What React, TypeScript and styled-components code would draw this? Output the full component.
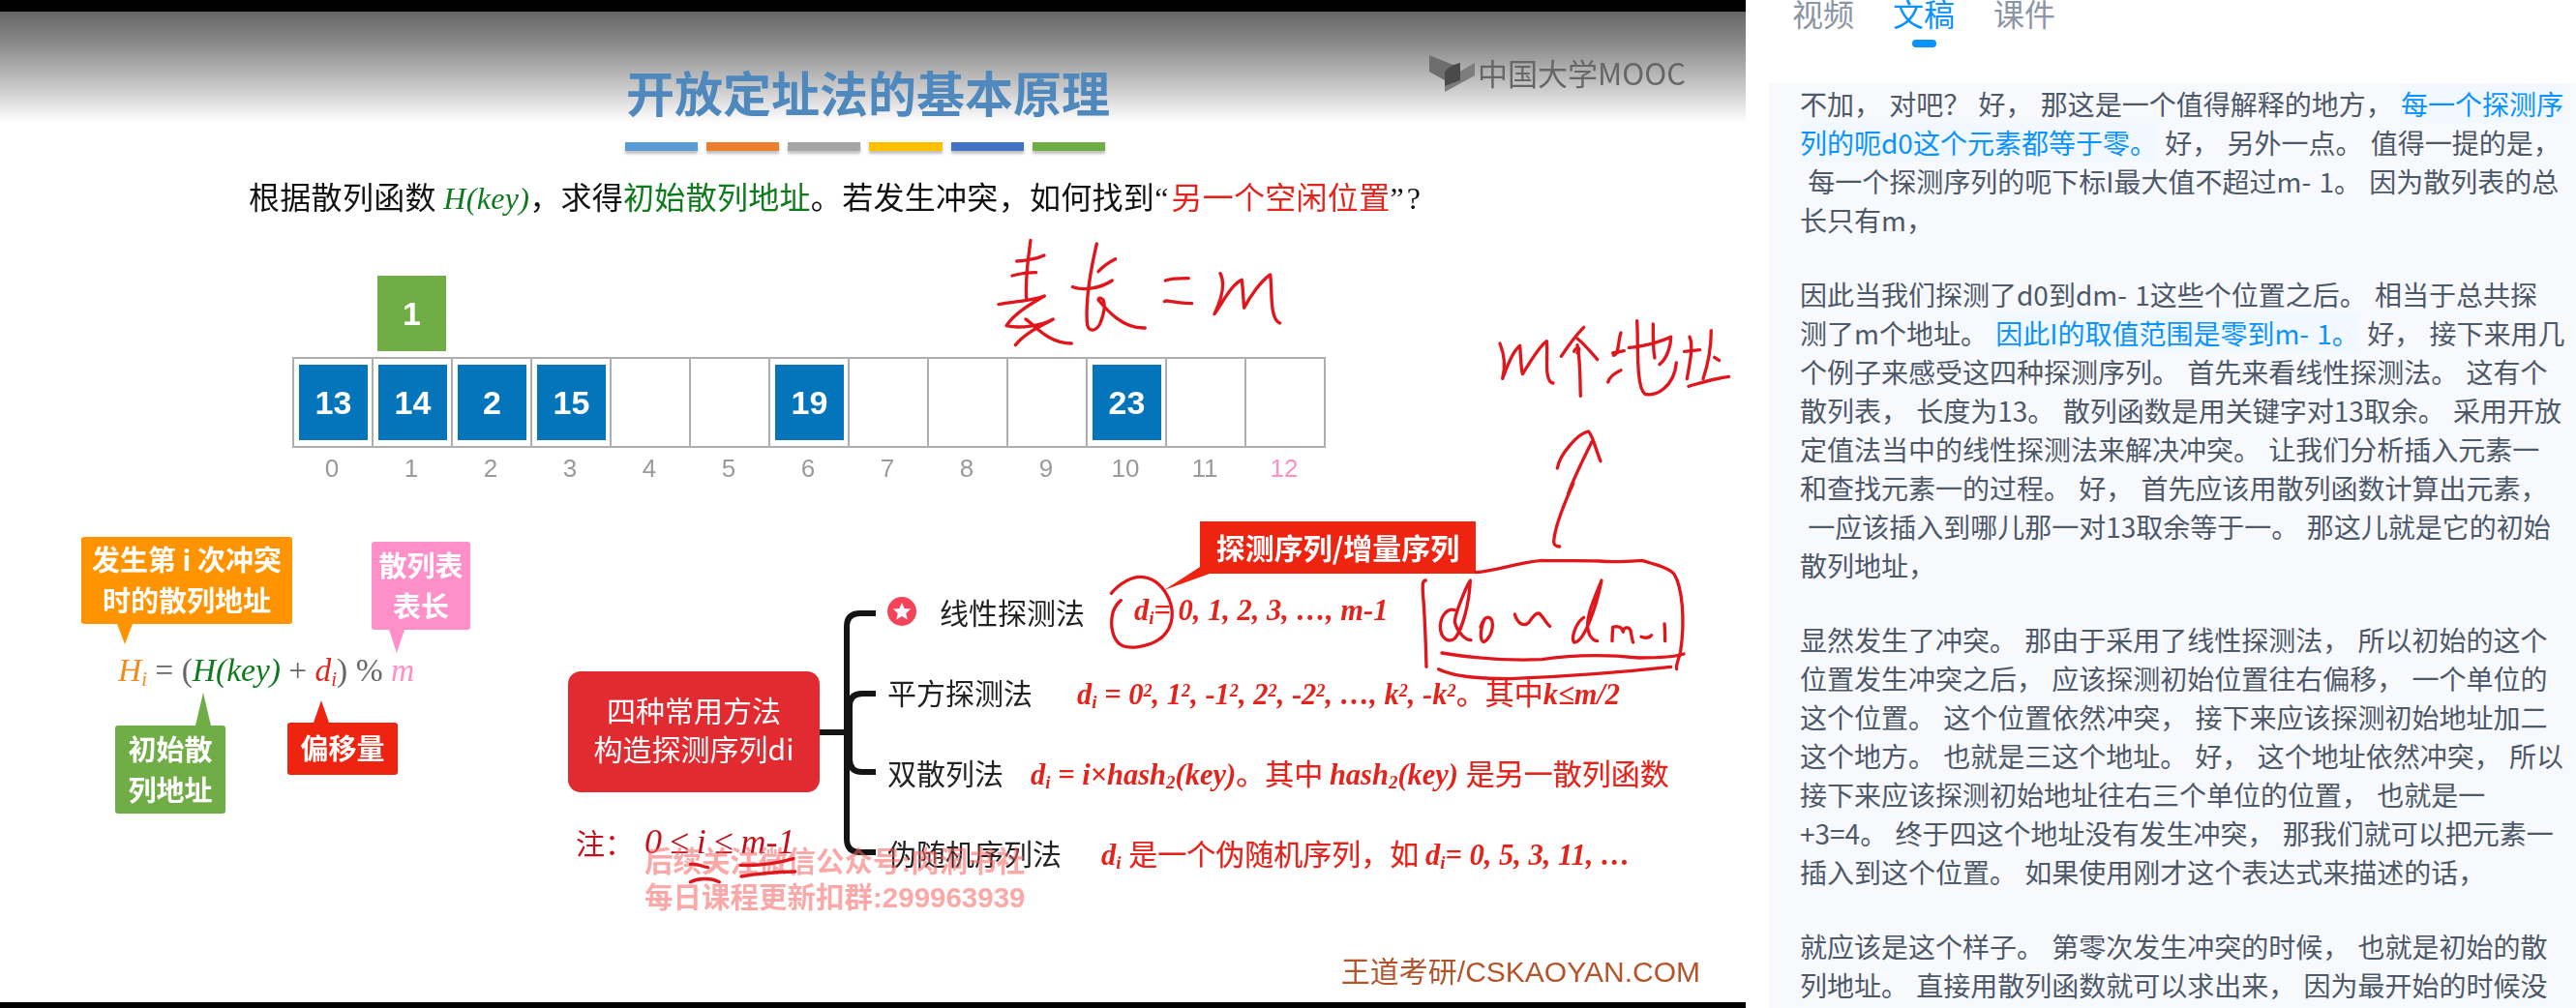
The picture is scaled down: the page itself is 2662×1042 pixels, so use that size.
import React from 'react';
import styled, { createGlobalStyle } from 'styled-components';

const CJK = '"Noto Sans CJK SC", sans-serif';
const LATIN_CJK = '"Liberation Sans", "Noto Sans CJK SC", sans-serif';
const SERIF = '"Liberation Serif", "Noto Sans CJK SC", serif';

const Global = createGlobalStyle`
  html, body { margin: 0; padding: 0; background: #fff; overflow: hidden; }
  #root { width: 2662px; height: 1042px; overflow: hidden; }
`;

const Page = styled.div`
  display: flex;
  width: 2662px;
  height: 1042px;
  overflow: hidden;
  background: #fff;
`;

const SlideFrame = styled.div`
  position: relative;
  flex: 0 0 1804px;
  height: 1042px;
  overflow: hidden;
  background: #000;
  padding: 12px 0 6px;
  box-sizing: border-box;
`;

const Slide = styled.div`
  position: relative;
  height: 1024px;
  background: #fff;
  filter: blur(0.5px);
  font-family: ${CJK};
`;

const Header = styled.header`
  display: flex;
  align-items: flex-start;
  box-sizing: border-box;
  height: 115px;
  padding: 45px 0 0 647px;
  background: linear-gradient(#666 0%, #8c8c8c 30%, #c4c4c4 65%, #fff 100%);
`;

const Title = styled.h1`
  margin: 10px 0 0;
  font-size: 50px;
  line-height: 55px;
  font-weight: 700;
  white-space: nowrap;
  color: #4f88bd;
`;

const Logo = styled.div`
  display: flex;
  align-items: flex-start;
  margin-left: 330px;
  color: #666;
`;

const LogoText = styled.span`
  margin: 0 0 0 2px;
  font-size: 31px;
  line-height: 36px;
  white-space: nowrap;
`;

const Bars = styled.div`
  display: grid;
  grid-template-columns: repeat(6, 1fr);
  gap: 9px;
  width: 496px;
  margin: 20px 0 0 646px;
`;

const Bar = styled.span<{ $color: string }>`
  height: 9px;
  background: ${(p) => p.$color};
  box-shadow: 0 3px 3px rgba(0, 0, 0, 0.25);
`;

const Lead = styled.p`
  margin: 22px 0 0 257px;
  font-size: 32px;
  line-height: 48px;
  letter-spacing: 0.3px;
  color: #111;
  white-space: nowrap;
`;

const Green = styled.span`
  color: #0d7a1c;
`;

const Red = styled.span`
  color: #e3241c;
`;

const Math = styled.i`
  font-family: ${SERIF};
`;

const Quote = styled.span`
  font-family: "Liberation Serif", serif;
  letter-spacing: 3px;
`;

const Floating = styled.div`
  display: flex;
  align-items: center;
  justify-content: center;
  width: 71px;
  height: 78px;
  margin: 56px 0 6px 390px;
  background: #70ad47;
  color: #fff;
  font: 700 34px "Liberation Sans", sans-serif;
`;

const Table = styled.div`
  display: grid;
  grid-template-columns: repeat(13, 82px);
  box-sizing: border-box;
  width: 1068px;
  height: 94px;
  margin-left: 302px;
  border: 2px solid #aeaeae;
  border-left: 0;
`;

const Cell = styled.div`
  box-sizing: border-box;
  padding: 6px 0 0 5px;
  border-left: 2px solid #aeaeae;
`;

const Key = styled.div`
  display: flex;
  align-items: center;
  justify-content: center;
  width: 71px;
  height: 78px;
  background: #0474bb;
  color: #fff;
  font: 700 34px "Liberation Sans", sans-serif;
`;

const Indexes = styled.div`
  display: grid;
  grid-template-columns: repeat(13, 82px);
  width: 1066px;
  height: 42px;
  margin-left: 302px;
`;

const Index = styled.span<{ $pink?: boolean }>`
  text-align: center;
  font: 26px/42px "Liberation Sans", sans-serif;
  color: ${(p) => (p.$pink ? '#ff8fc8' : '#9a9a9a')};
`;

const Lower = styled.div`
  display: flex;
  align-items: flex-start;
`;

const FormulaColumn = styled.section`
  flex: 0 0 587px;
  box-sizing: border-box;
  padding-top: 50px;
`;

const CalloutRow = styled.div<{ $left: number; $gap: number }>`
  display: flex;
  align-items: flex-start;
  gap: ${(p) => p.$gap}px;
  margin-left: ${(p) => p.$left}px;
`;

const Callout = styled.div<{
  $color: string;
  $w: number;
  $h: number;
  $top?: number;
  $tipX: number;
  $tipH: number;
  $up?: boolean;
}>`
  position: relative;
  display: flex;
  flex-direction: column;
  align-items: center;
  justify-content: center;
  box-sizing: border-box;
  width: ${(p) => p.$w}px;
  height: ${(p) => p.$h}px;
  margin-top: ${(p) => p.$top ?? 0}px;
  padding-bottom: 4px;
  border-radius: 3px;
  background: ${(p) => p.$color};
  color: #fff;
  font-size: 29px;
  line-height: 42px;
  font-weight: 700;
  white-space: nowrap;

  &::after {
    content: '';
    position: absolute;
    left: ${(p) => p.$tipX - 8}px;
    ${(p) => (p.$up ? `bottom: 100%;` : `top: 100%;`)}
    width: 16px;
    height: ${(p) => p.$tipH}px;
    background: ${(p) => p.$color};
    clip-path: ${(p) =>
      p.$up ? 'polygon(50% 0, 100% 100%, 0 100%)' : 'polygon(0 0, 100% 0, 50% 100%)'};
  }
`;

const Formula = styled.div`
  margin: 19px 0 31px 122px;
  font: 33.5px/46px ${SERIF};
  color: #666;
  white-space: nowrap;
`;

const Term = styled.i<{ $color: string }>`
  color: ${(p) => p.$color};
`;

const Sub = styled.sub`
  font-size: 0.62em;
  line-height: 0;
  vertical-align: -0.22em;
`;

const Sup = styled.sup`
  font-size: 0.6em;
  line-height: 0;
  vertical-align: 0.42em;
`;

const MethodColumn = styled.section`
  flex: 0 0 260px;
  padding-top: 189px;
`;

const MethodBox = styled.div`
  display: flex;
  flex-direction: column;
  align-items: center;
  justify-content: center;
  box-sizing: border-box;
  height: 125px;
  padding-bottom: 8px;
  border-radius: 13px;
  background: #e22b30;
  color: #fff;
  font-size: 30px;
  line-height: 40px;
  white-space: nowrap;
`;

const Note = styled.div`
  display: flex;
  margin: 31px 0 0 8px;
  color: #c3101c;
  font-size: 30px;
  line-height: 40px;
  white-space: nowrap;
`;

const NoteMath = styled.i`
  margin-left: 11px;
  font-family: ${SERIF};
  font-size: 36px;
  word-spacing: -1px;
`;

const Brace = styled.svg`
  flex: 0 0 58px;
  margin-top: 118px;
`;

const Branches = styled.section`
  display: flex;
  flex-direction: column;
  flex: 1;
  box-sizing: border-box;
  padding: 85px 47px 0 12px;
`;

const Branch = styled.div<{ $gap: number }>`
  display: flex;
  align-items: center;
  gap: ${(p) => p.$gap}px;
  height: 83px;
  white-space: nowrap;
`;

const BranchName = styled.span`
  display: flex;
  align-items: center;
  gap: 24px;
  font-size: 30px;
  color: #222;
`;

const Rule = styled.span`
  font: italic 700 30.5px ${SERIF};
  color: #e3241c;
`;

const RuleCjk = styled.span`
  font: 400 30px ${CJK};
  -webkit-text-stroke: 0.2px #e3241c;
`;

const Credit = styled.div`
  align-self: flex-end;
  margin-top: 63px;
  font: 30px/40px ${LATIN_CJK};
  color: #b5532a;
  white-space: nowrap;
`;

const ProbeTag = styled.div`
  position: absolute;
  left: 1240px;
  top: 527px;
  display: flex;
  align-items: center;
  justify-content: center;
  box-sizing: border-box;
  width: 285px;
  height: 54px;
  padding-bottom: 3px;
  background: #ee2410;
  color: #fff;
  font-size: 30px;
  font-weight: 700;
  white-space: nowrap;

  &::after {
    content: '';
    position: absolute;
    left: -37px;
    top: 40px;
    width: 50px;
    height: 31px;
    background: #ee2410;
    clip-path: polygon(37px 7px, 0 31px, 47px 14px, 37px 0);
  }
`;

const Watermark = styled.div`
  position: absolute;
  left: 666px;
  top: 860px;
  color: rgba(246, 96, 96, 0.55);
  font: 700 29.5px/37px ${LATIN_CJK};
  white-space: nowrap;
`;

const Ink = styled.svg`
  position: absolute;
  left: 0;
  top: -12px;
  width: 1804px;
  height: 1042px;
  pointer-events: none;
  overflow: visible;
`;

const Stroke = styled.g`
  fill: none;
  stroke: #e0161c;
  stroke-width: 10;
  stroke-linecap: round;
  stroke-linejoin: round;
`;

const Aside = styled.aside`
  flex: 1;
  min-width: 0;
  font-family: ${CJK};
`;

const Tabs = styled.nav`
  display: flex;
  gap: 40px;
  height: 86px;
  padding-left: 48px;
`;

const Tab = styled.div<{ $active?: boolean }>`
  position: relative;
  font-size: 32px;
  line-height: 26px;
  color: ${(p) => (p.$active ? '#0a93ff' : '#8b95a5')};

  &::after {
    content: '';
    display: ${(p) => (p.$active ? 'block' : 'none')};
    width: 25px;
    height: 8px;
    margin: 15px auto 0;
    border-radius: 4px;
    background: #0a93ff;
  }
`;

const Transcript = styled.div`
  box-sizing: border-box;
  height: 956px;
  margin-left: 24px;
  padding: 1px 0 0 32px;
  overflow: hidden;
  background: #f7f9fd;
  color: #4d5869;
  font-size: 28px;
  line-height: 40px;
  word-spacing: 2px;
`;

const Paragraph = styled.div`
  margin-bottom: 37px;
`;

const Line = styled.div`
  white-space: pre;
  height: 40px;
`;

const Mark = styled.span`
  color: #0a93ff;
  background: #f1f8ff;
`;

const barColors = ['#5b9bd5', '#ed7d31', '#a5a5a5', '#ffc000', '#4472c4', '#70ad47'];
const keys: (number | null)[] = [13, 14, 2, 15, null, null, 19, null, null, null, 23, null, null];

const Di = () => (
  <>
    d<Sub>i</Sub>
  </>
);

export default function App() {
  return (
    <Page>
      <Global />
      <SlideFrame>
        <Slide>
          <Header>
            <Title>开放定址法的基本原理</Title>
            <Logo>
              <svg width="48" height="38" viewBox="0 0 48 38">
                <polygon points="0,0 32,13 16,22 16,26 0,17" fill="#6e6e6e" />
                <polygon points="16,38 16,26 47,8 47,21" fill="#7d7d7d" />
                <path d="M16 17 C20 12 26 9 32 8 L32 26 L16 32 Z" fill="#4a4a4a" />
              </svg>
              <LogoText>中国大学MOOC</LogoText>
            </Logo>
          </Header>
          <Bars>
            {barColors.map((c) => (
              <Bar key={c} $color={c} />
            ))}
          </Bars>
          <Lead>
            根据散列函数 <Green><Math>H(key)</Math></Green>，求得<Green>初始散列地址</Green>。若发生冲突，如何找到<Quote>“</Quote><Red>另一个空闲位置</Red><Quote>”?</Quote>
          </Lead>
          <Floating>1</Floating>
          <Table>
            {keys.map((k, i) => (
              <Cell key={i}>{k !== null && <Key>{k}</Key>}</Cell>
            ))}
          </Table>
          <Indexes>
            {keys.map((_, i) => (
              <Index key={i} $pink={i === 12}>{i}</Index>
            ))}
          </Indexes>
          <Lower>
            <FormulaColumn>
              <CalloutRow $left={84} $gap={82}>
                <Callout $color="#ff9400" $w={218} $h={90} $tipX={45} $tipH={21}>
                  <span>发生第 i 次冲突</span>
                  <span>时的散列地址</span>
                </Callout>
                <Callout $color="#ff8fc8" $w={102} $h={91} $top={5} $tipX={26} $tipH={24}>
                  <span>散列表</span>
                  <span>表长</span>
                </Callout>
              </CalloutRow>
              <Formula>
                <Term $color="#f08a1c">H<Sub>i</Sub></Term> = (<Term $color="#0d7a1c">H(key)</Term> + <Term $color="#e3241c">d<Sub>i</Sub></Term>) % <Term $color="#ff8fc8">m</Term>
              </Formula>
              <CalloutRow $left={119} $gap={64}>
                <Callout $color="#70ad47" $w={114} $h={91} $top={3} $tipX={91} $tipH={34} $up>
                  <span>初始散</span>
                  <span>列地址</span>
                </Callout>
                <Callout $color="#ee2410" $w={114} $h={54} $tipX={35} $tipH={23} $up>
                  <span>偏移量</span>
                </Callout>
              </CalloutRow>
            </FormulaColumn>
            <MethodColumn>
              <MethodBox>
                <span>四种常用方法</span>
                <span>构造探测序列di</span>
              </MethodBox>
              <Note>
                注：<NoteMath>0 ≤ i ≤ m-1</NoteMath>
              </Note>
            </MethodColumn>
            <Brace width="58" height="270" viewBox="0 0 58 270">
              <g fill="none" stroke="#141414" strokeWidth="6">
                <path d="M0 134 H30" />
                <path d="M58 11 H42 Q28 11 28 25 V244 Q28 258 42 258 H58" />
                <path d="M58 94 H44 Q31 94 31 107 V162 Q31 175 44 175 H58" />
              </g>
            </Brace>
            <Branches>
              <Branch $gap={51}>
                <BranchName>
                  <svg width="30" height="30" viewBox="0 0 30 30">
                    <circle cx="15" cy="15" r="15" fill="#f4445a" />
                    <polygon
                      points="15,6 17.6,12 24,12.6 19.2,17 20.6,23.4 15,20 9.4,23.4 10.8,17 6,12.6 12.4,12"
                      fill="#fff"
                    />
                  </svg>
                  线性探测法
                </BranchName>
                <Rule><Di />= 0, 1, 2, 3, …, m-1</Rule>
              </Branch>
              <Branch $gap={46}>
                <BranchName>平方探测法</BranchName>
                <Rule>
                  <Di /> = 0<Sup>2</Sup>, 1<Sup>2</Sup>, -1<Sup>2</Sup>, 2<Sup>2</Sup>, -2<Sup>2</Sup>, …, k<Sup>2</Sup>, -k<Sup>2</Sup>
                  <RuleCjk>。其中</RuleCjk>k≤m/2
                </Rule>
              </Branch>
              <Branch $gap={28}>
                <BranchName>双散列法</BranchName>
                <Rule>
                  <Di /> = i×hash<Sub>2</Sub>(key)<RuleCjk>。其中 </RuleCjk>hash<Sub>2</Sub>(key) <RuleCjk>是另一散列函数</RuleCjk>
                </Rule>
              </Branch>
              <Branch $gap={41}>
                <BranchName>伪随机序列法</BranchName>
                <Rule>
                  <Di /> <RuleCjk>是一个伪随机序列，如 </RuleCjk><Di />= 0, 5, 3, 11, …
                </Rule>
              </Branch>
              <Credit>王道考研/CSKAOYAN.COM</Credit>
            </Branches>
          </Lower>
          <ProbeTag>探测序列/增量序列</ProbeTag>
          <Watermark>
            <div>后续关注微信公众号:肉洞书社</div>
            <div>每日课程更新扣群:299963939</div>
          </Watermark>
          <Ink viewBox="0 0 1804 1042">
            <Stroke transform="translate(1020 240) scale(0.3333)">
              <path d="M135 25 C130 70 118 130 122 205" />
              <path d="M92 90 C120 90 160 80 177 72" />
              <path d="M78 135 C105 128 130 125 152 125" />
              <path d="M36 224 C80 215 130 215 178 198 C150 215 90 245 60 290 C100 300 170 290 205 270 C170 290 120 310 88 350" />
              <path d="M120 270 C150 290 190 345 262 345" />
              <path d="M340 36 C325 100 305 200 310 280 C312 310 335 310 350 285 C360 260 370 230 360 210 C350 200 345 205 345 210 C370 240 420 300 490 297" />
              <path d="M265 170 C300 182 350 175 388 150" />
              <path d="M345 122 C360 105 380 92 398 83" />
              <path d="M553 150 C570 143 600 143 625 143" />
              <path d="M550 215 C560 208 560 218 635 221" />
              <path d="M723 128 C735 150 735 190 705 254 C735 210 760 160 790 148 C795 190 795 220 797 235 C815 200 850 150 878 132 C885 180 875 270 908 282" />
            </Stroke>
            <Stroke transform="translate(1530 320) scale(0.3333)">
              <path d="M60 105 C70 130 80 170 68 214 C85 170 100 130 122 112 C125 150 125 180 130 200 C150 170 180 115 205 98 C210 140 195 225 225 228" />
              <path d="M250 145 C270 115 300 75 320 55" />
              <path d="M300 90 C320 105 345 135 362 155" />
              <path d="M300 110 C310 160 308 220 310 268" />
              <path d="M290 130 C295 115 315 115 300 135" />
              <path d="M435 72 C425 100 430 140 412 142" />
              <path d="M410 135 L445 128" />
              <path d="M435 188 C420 195 400 205 395 225" />
              <path d="M460 118 C500 115 560 100 590 85 C590 110 580 150 555 170" />
              <path d="M535 45 C535 90 535 130 540 150" />
              <path d="M485 35 C490 100 480 240 510 262 C545 270 600 240 607 165" />
              <path d="M648 85 C660 110 650 160 640 215" />
              <path d="M632 130 L680 125" />
              <path d="M715 65 C715 120 705 170 690 215" />
              <path d="M725 148 L740 158" />
              <path d="M645 238 C690 225 730 212 770 208" />
              <path d="M238 492 C245 450 300 385 335 378 C350 395 355 430 372 470" />
              <path d="M345 410 C320 460 290 520 272 570" />
            </Stroke>
            <Stroke transform="translate(1460 500) scale(0.3333)">
              <path d="M497 0 C470 60 440 130 437 180 C437 190 445 195 455 195" />
              <path d="M195 275 C260 270 320 245 400 238 C480 240 520 238 580 240 C620 245 680 240 710 238 C750 250 790 260 810 280 C835 320 845 420 830 520 C825 545 815 560 818 575" />
              <path d="M40 300 C28 300 30 320 32 350 C38 420 40 500 42 568" />
              <path d="M130 392 C110 385 88 405 85 440 C85 480 110 495 130 480 C155 450 175 370 178 300 C175 300 130 400 130 430 C140 465 165 485 180 485" />
              <path d="M222 420 C205 460 210 495 222 490 C250 470 255 420 235 415 C222 412 215 430 210 445" />
              <path d="M316 405 C325 435 345 445 360 430 C370 415 385 395 395 405 C405 415 415 435 425 442" />
              <path d="M530 415 C505 430 490 480 500 492 C530 495 570 380 585 300 C570 340 530 420 545 460 C550 480 565 488 572 488" />
              <path d="M618 488 C618 470 620 455 620 445 C635 440 650 445 652 460 C652 445 670 442 675 455 C678 470 680 485 683 492" />
              <path d="M708 475 C720 480 735 478 740 470" />
              <path d="M780 435 C782 450 782 470 782 488" />
              <path d="M90 525 C180 540 280 550 400 545 C500 530 600 530 700 540 C760 540 820 535 840 528" />
              <path d="M80 575 C120 595 200 605 300 605 C420 600 600 590 800 568" />
            </Stroke>
            <Stroke transform="translate(1130 580) scale(0.3333)">
              <path d="M55 100 C80 70 120 45 155 50 C190 55 215 75 235 120 C255 170 240 220 200 245 C170 265 110 275 85 260 C60 245 50 200 60 160 C65 145 75 130 85 122" />
            </Stroke>
            <Stroke transform="translate(640 840) scale(0.3333)">
              <path d="M220 160 C240 155 260 170 275 170" />
              <path d="M375 163 C420 165 480 160 540 143" />
              <path d="M378 198 C420 190 460 185 545 183" />
              <path d="M220 215 C240 205 280 200 310 215" />
            </Stroke>
          </Ink>
        </Slide>
      </SlideFrame>
      <Aside>
        <Tabs>
          <Tab>视频</Tab>
          <Tab $active>文稿</Tab>
          <Tab>课件</Tab>
        </Tabs>
        <Transcript>
          <Paragraph>
            <Line>不加， 对吧？ 好， 那这是一个值得解释的地方， <Mark>每一个探测序</Mark></Line>
            <Line><Mark>列的呃d0这个元素都等于零。</Mark> 好， 另外一点。 值得一提的是，</Line>
            <Line> 每一个探测序列的呃下标I最大值不超过m- 1。 因为散列表的总</Line>
            <Line>长只有m，</Line>
          </Paragraph>
          <Paragraph>
            <Line>因此当我们探测了d0到dm- 1这些个位置之后。 相当于总共探</Line>
            <Line>测了m个地址。 <Mark>因此I的取值范围是零到m- 1。</Mark> 好， 接下来用几</Line>
            <Line>个例子来感受这四种探测序列。 首先来看线性探测法。 这有个</Line>
            <Line>散列表， 长度为13。 散列函数是用关键字对13取余。 采用开放</Line>
            <Line>定值法当中的线性探测法来解决冲突。 让我们分析插入元素一</Line>
            <Line>和查找元素一的过程。 好， 首先应该用散列函数计算出元素，</Line>
            <Line> 一应该插入到哪儿那一对13取余等于一。 那这儿就是它的初始</Line>
            <Line>散列地址，</Line>
          </Paragraph>
          <Paragraph>
            <Line>显然发生了冲突。 那由于采用了线性探测法， 所以初始的这个</Line>
            <Line>位置发生冲突之后， 应该探测初始位置往右偏移， 一个单位的</Line>
            <Line>这个位置。 这个位置依然冲突， 接下来应该探测初始地址加二</Line>
            <Line>这个地方。 也就是三这个地址。 好， 这个地址依然冲突， 所以</Line>
            <Line>接下来应该探测初始地址往右三个单位的位置， 也就是一</Line>
            <Line>+3=4。 终于四这个地址没有发生冲突， 那我们就可以把元素一</Line>
            <Line>插入到这个位置。 如果使用刚才这个表达式来描述的话，</Line>
          </Paragraph>
          <Paragraph>
            <Line>就应该是这个样子。 第零次发生冲突的时候， 也就是初始的散</Line>
            <Line>列地址。 直接用散列函数就可以求出来， 因为最开始的时候没</Line>
          </Paragraph>
        </Transcript>
      </Aside>
    </Page>
  );
}
